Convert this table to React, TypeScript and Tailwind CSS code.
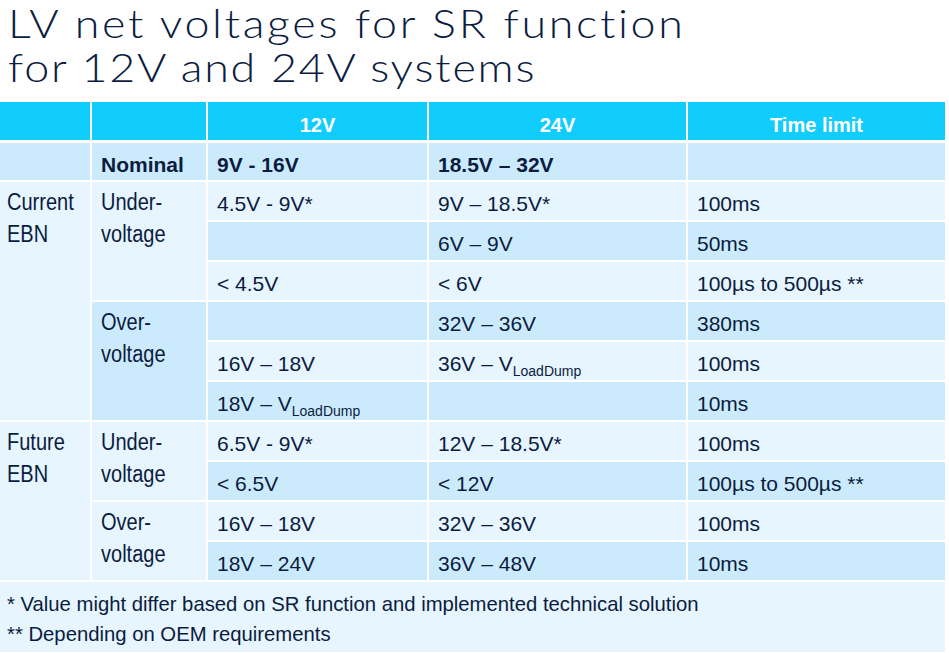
import * as React from 'react';

const DARK = 'bg-[#cbebfd]';
const LIGHT = 'bg-[#e6f5fe]';

const Cell: React.FC<{ tone: 'd' | 'l'; className?: string; children?: React.ReactNode }> = ({ tone, className = '', children }) => (
    <div className={`${tone === 'd' ? DARK : LIGHT} px-[9px] pt-[10px] leading-[23px] text-[21px] whitespace-nowrap ${className}`}>
        {children}
    </div>
);

const Label: React.FC<{ tone: 'd' | 'l'; span: string; lines: string[]; pad?: string }> = ({ tone, span, lines, pad = 'pl-[9px]' }) => (
    <div className={`${tone === 'd' ? DARK : LIGHT} ${span} ${pad} pt-[4px]`}>
        {lines.map((l) => (
            <div key={l} className="text-[23px] leading-[32px] scale-x-[0.87] origin-left whitespace-nowrap">{l}</div>
        ))}
    </div>
);

const VLoad: React.FC<{ prefix: string }> = ({ prefix }) => (
    <>
        {prefix}V<span className="text-[14px] relative top-[5px]">LoadDump</span>
    </>
);

type Row = { tone: 'd' | 'l'; v12: React.ReactNode; v24: React.ReactNode; t: string };

const App: React.FC = () => {
    const rowsA: Row[] = [
        { tone: 'l', v12: '4.5V - 9V*', v24: '9V – 18.5V*', t: '100ms' },
        { tone: 'd', v12: '', v24: '6V – 9V', t: '50ms' },
        { tone: 'l', v12: '< 4.5V', v24: '< 6V', t: '100µs to 500µs **' },
    ];
    const rowsB: Row[] = [
        { tone: 'd', v12: '', v24: '32V – 36V', t: '380ms' },
        { tone: 'l', v12: '16V – 18V', v24: <VLoad prefix="36V – " />, t: '100ms' },
        { tone: 'd', v12: <VLoad prefix="18V – " />, v24: '', t: '10ms' },
    ];
    const rowsC: Row[] = [
        { tone: 'l', v12: '6.5V - 9V*', v24: '12V – 18.5V*', t: '100ms' },
        { tone: 'd', v12: '< 6.5V', v24: '< 12V', t: '100µs to 500µs **' },
    ];
    const rowsD: Row[] = [
        { tone: 'l', v12: '16V – 18V', v24: '32V – 36V', t: '100ms' },
        { tone: 'd', v12: '18V – 24V', v24: '36V – 48V', t: '10ms' },
    ];

    const renderRows = (rows: Row[]) =>
        rows.map((r, i) => (
            <React.Fragment key={i}>
                <Cell tone={r.tone}>{r.v12}</Cell>
                <Cell tone={r.tone}>{r.v24}</Cell>
                <Cell tone={r.tone}>{r.t}</Cell>
            </React.Fragment>
        ));

    return (
        <div className="w-[949px] h-[653px] bg-white text-[#0b1c40] overflow-hidden" style={{ fontFamily: '"Liberation Sans", Arial, sans-serif' }}>
            <h1 className="pl-[8px] pt-[1px] h-[102px] text-[40px] leading-[44px] font-light" style={{ fontFamily: 'Lato, sans-serif' }}>
                <div className="whitespace-nowrap scale-x-[1.12] origin-left tracking-[2.4px]">LV net voltages for SR function</div>
                <div className="whitespace-nowrap scale-x-[1.12] origin-left tracking-[1.6px]">for 12V and 24V systems</div>
            </h1>

            <div className="w-[945px] grid grid-cols-[90px_114px_219px_257px_257px] gap-x-[2px] h-[37px] bg-white">
                <div className="bg-[#11cdfd]" />
                <div className="bg-[#11cdfd]" />
                <div className="bg-[#11cdfd] text-white font-bold text-[20px] text-center pt-[8px]">12V</div>
                <div className="bg-[#11cdfd] text-white font-bold text-[20px] text-center pt-[8px]">24V</div>
                <div className="bg-[#11cdfd] text-white font-bold text-[20px] text-center pt-[8px]">Time limit</div>
            </div>

            <div className="mt-[4px] w-[945px] grid grid-cols-[90px_114px_219px_257px_257px] grid-rows-[37px_repeat(10,38px)_70px] gap-[2px] bg-white">
                <div className={DARK} />
                <Cell tone="d" className="font-bold pt-[8px] text-[20px]">Nominal</Cell>
                <Cell tone="d" className="font-bold pt-[8px] text-[20px]">9V - 16V</Cell>
                <Cell tone="d" className="font-bold pt-[8px] text-[20px]">18.5V – 32V</Cell>
                <div className={DARK} />

                <Label tone="l" span="row-span-6" lines={['Current', 'EBN']} pad="pl-[7px]" />
                <Label tone="l" span="row-span-3" lines={['Under-', 'voltage']} />
                {renderRows(rowsA)}
                <Label tone="d" span="row-span-3" lines={['Over-', 'voltage']} />
                {renderRows(rowsB)}

                <Label tone="l" span="row-span-4" lines={['Future', 'EBN']} pad="pl-[7px]" />
                <Label tone="l" span="row-span-2" lines={['Under-', 'voltage']} />
                {renderRows(rowsC)}
                <Label tone="l" span="row-span-2" lines={['Over-', 'voltage']} />
                {renderRows(rowsD)}

                <div className={`${LIGHT} col-span-5 px-[7px] pt-[7px] text-[20.3px] leading-[30px]`}>
                    <div>* Value might differ based on SR function and implemented technical solution</div>
                    <div>** Depending on OEM requirements</div>
                </div>
            </div>
        </div>
    );
};

export default App;
